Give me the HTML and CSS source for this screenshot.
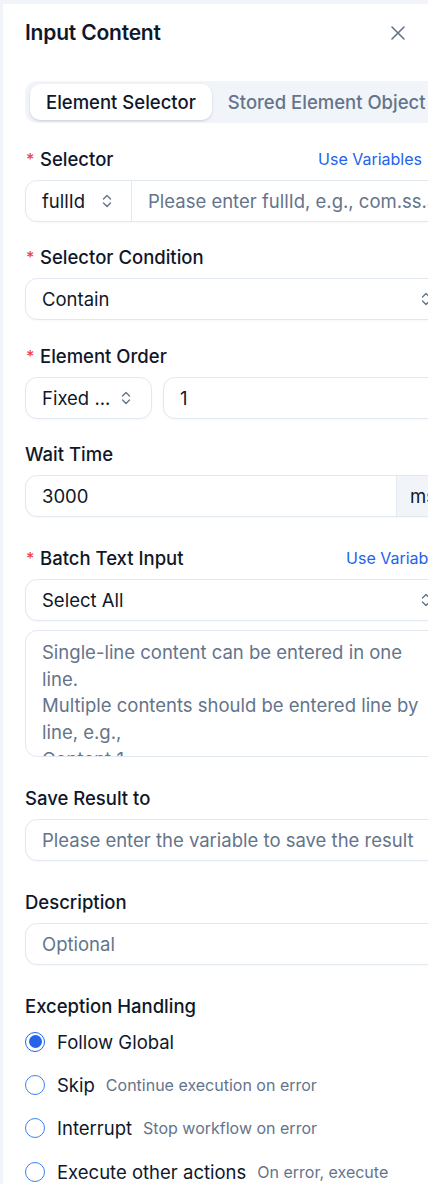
FILE: index.html
```html
<!DOCTYPE html>
<html lang="en">
<head>
<meta charset="utf-8">
<title>Input Content</title>
<link rel="stylesheet" href="styles.css">
</head>
<body>
<div class="panel">
  <header class="panel-header">
    <h1 class="title">Input Content</h1>
    <button class="close" aria-label="Close">
      <svg viewBox="0 0 24 24" width="24" height="24" fill="none" stroke="currentColor" stroke-width="1.6" stroke-linecap="round"><path d="M18 6 6 18"/><path d="m6 6 12 12"/></svg>
    </button>
  </header>

  <div class="tabs">
    <div class="tab active">Element Selector</div>
    <div class="tab">Stored Element Object</div>
  </div>

  <div class="field">
    <div class="label-row">
      <label class="label"><span class="req">*</span>Selector</label>
      <a class="link link-inset">Use Variables</a>
    </div>
    <div class="control group">
      <div class="group-select">
        <span>fullId</span>
        <svg class="chev" viewBox="0 0 10 14" fill="none" stroke="currentColor" stroke-width="1.4" stroke-linecap="round" stroke-linejoin="round"><path d="M1.5 5 5 1.5 8.5 5"/><path d="M1.5 9 5 12.5 8.5 9"/></svg>
      </div>
      <div class="group-input placeholder">Please enter fullId, e.g., com.ss.android.ugc:id/title</div>
    </div>
  </div>

  <div class="field">
    <div class="label-row">
      <label class="label"><span class="req">*</span>Selector Condition</label>
    </div>
    <div class="control select">
      <span>Contain</span>
      <svg class="chev" viewBox="0 0 10 14" fill="none" stroke="currentColor" stroke-width="1.4" stroke-linecap="round" stroke-linejoin="round"><path d="M1.5 5 5 1.5 8.5 5"/><path d="M1.5 9 5 12.5 8.5 9"/></svg>
    </div>
  </div>

  <div class="field">
    <div class="label-row">
      <label class="label"><span class="req">*</span>Element Order</label>
    </div>
    <div class="row">
      <div class="control select select-small">
        <span>Fixed ...</span>
        <svg class="chev" viewBox="0 0 10 14" fill="none" stroke="currentColor" stroke-width="1.4" stroke-linecap="round" stroke-linejoin="round"><path d="M1.5 5 5 1.5 8.5 5"/><path d="M1.5 9 5 12.5 8.5 9"/></svg>
      </div>
      <div class="control grow">1</div>
    </div>
  </div>

  <div class="field">
    <div class="label-row">
      <label class="label">Wait Time</label>
    </div>
    <div class="control group">
      <div class="group-input">3000</div>
      <div class="addon">ms</div>
    </div>
  </div>

  <div class="field field-wide">
    <div class="label-row">
      <label class="label"><span class="req">*</span>Batch Text Input</label>
      <a class="link">Use Variables</a>
    </div>
    <div class="control select">
      <span>Select All</span>
      <svg class="chev" viewBox="0 0 10 14" fill="none" stroke="currentColor" stroke-width="1.4" stroke-linecap="round" stroke-linejoin="round"><path d="M1.5 5 5 1.5 8.5 5"/><path d="M1.5 9 5 12.5 8.5 9"/></svg>
    </div>
    <div class="textarea placeholder">
      Single-line content can be entered in one<br>
      line.<br>
      Multiple contents should be entered line by<br>
      line, e.g.,<br>
      Content 1
    </div>
  </div>

  <div class="field field-wide">
    <div class="label-row">
      <label class="label">Save Result to</label>
    </div>
    <div class="control placeholder">Please enter the variable to save the result</div>
  </div>

  <div class="field field-wide">
    <div class="label-row">
      <label class="label">Description</label>
    </div>
    <div class="control placeholder">Optional</div>
  </div>

  <div class="field field-wide">
    <div class="label-row">
      <label class="label">Exception Handling</label>
    </div>
    <div class="radios">
      <div class="radio-row"><span class="radio checked"></span><span class="radio-label">Follow Global</span></div>
      <div class="radio-row"><span class="radio"></span><span class="radio-label">Skip</span><span class="radio-desc">Continue execution on error</span></div>
      <div class="radio-row"><span class="radio"></span><span class="radio-label">Interrupt</span><span class="radio-desc">Stop workflow on error</span></div>
      <div class="radio-row"><span class="radio"></span><span class="radio-label">Execute other actions</span><span class="radio-desc">On error, execute other actions</span></div>
    </div>
  </div>
</div>
</body>
</html>
```

FILE: styles.css
```css
* {
  box-sizing: border-box;
  margin: 0;
  padding: 0;
}

html,
body {
  width: 428px;
  height: 1184px;
  overflow: hidden;
}

body {
  background: #f1f5f9;
  padding: 4px 0 0 3px;
  font-family: Inter, "Noto Sans", sans-serif;
  color: #0f172a;
}

.panel {
  width: 480px;
  min-height: 1220px;
  background: #fff;
  padding: 15px 33px 0 22px;
}

.panel-header {
  display: flex;
  align-items: center;
  justify-content: space-between;
  height: 28px;
}

.title {
  font-size: 21px;
  font-weight: 600;
  line-height: 28px;
  letter-spacing: -0.2px;
}

.close {
  width: 24px;
  height: 24px;
  margin-right: 40px;
  border: 0;
  background: none;
  color: #64748b;
  display: flex;
  align-items: center;
  justify-content: center;
}

.tabs {
  margin-top: 34px;
  height: 42px;
  padding: 3px 5px;
  display: flex;
  background: #f1f5f9;
  border-radius: 12px;
}

.tab {
  height: 36px;
  padding: 0 16px;
  display: flex;
  align-items: center;
  font-size: 18.5px;
  font-weight: 500;
  color: #64748b;
  white-space: nowrap;
  border-radius: 10px;
}

.tab.active {
  background: #fff;
  color: #0f172a;
  box-shadow: 0 1px 3px rgba(15, 23, 42, 0.12), 0 1px 2px rgba(15, 23, 42, 0.06);
}

.field {
  margin-top: 24.5px;
}

.field-wide {
  margin-top: 30px;
}

.label-row {
  height: 22px;
  margin-bottom: 10px;
  display: flex;
  align-items: center;
  justify-content: space-between;
}

.label {
  display: flex;
  align-items: center;
  font-size: 18.5px;
  font-weight: 500;
  line-height: 22px;
  white-space: nowrap;
}

.req {
  width: 15px;
  padding-left: 1px;
  color: #ef4444;
  font-size: 16px;
}

.link {
  color: #2563eb;
  font-size: 16px;
  white-space: nowrap;
}

.link-inset {
  margin-right: 28px;
}

.control {
  height: 42px;
  border: 1px solid #e2e8f0;
  border-radius: 12px;
  padding: 0 16px;
  display: flex;
  align-items: center;
  font-size: 18.5px;
  background: #fff;
  white-space: nowrap;
  overflow: hidden;
  box-shadow: 0 1px 2px rgba(15, 23, 42, 0.03);
}

.placeholder {
  color: #64748b;
}

.select {
  justify-content: space-between;
  padding-right: 18px;
}

.chev {
  width: 10px;
  height: 14px;
  color: #64748b;
  flex: none;
}

.group {
  padding: 0;
}

.group-select {
  width: 106px;
  height: 100%;
  flex: none;
  display: flex;
  align-items: center;
  justify-content: space-between;
  padding: 0 19px 0 16px;
  border-right: 1px solid #e2e8f0;
}

.group-input {
  flex: 1;
  min-width: 0;
  padding: 0 16px;
  overflow: hidden;
}

.addon {
  height: 100%;
  width: 53px;
  flex: none;
  display: flex;
  align-items: center;
  padding-left: 13px;
  background: #f1f5f9;
  border-left: 1px solid #e2e8f0;
}

.row {
  display: flex;
  gap: 11px;
}

.select-small {
  width: 127px;
  flex: none;
  padding-right: 20px;
}

.grow {
  flex: 1;
}

.textarea {
  margin-top: 9px;
  height: 127px;
  border: 1px solid #e2e8f0;
  border-radius: 12px;
  padding: 8px 16px 0;
  font-size: 18.5px;
  line-height: 26.67px;
  overflow: hidden;
  white-space: nowrap;
}

.radios {
  width: 405px;
  margin-top: 12.7px;
  display: flex;
  flex-direction: column;
  gap: 19.3px;
}

.radio-row {
  min-height: 24px;
  display: flex;
  align-items: flex-start;
  line-height: 24px;
}

.radio {
  width: 20px;
  height: 20px;
  margin-top: 2px;
  flex: none;
  border: 1.5px solid #3b82f6;
  border-radius: 50%;
  background: #fff;
  margin-right: 12px;
  position: relative;
}

.radio.checked {
  border-color: #2563eb;
}

.radio.checked::after {
  content: "";
  position: absolute;
  inset: 2.5px;
  border-radius: 50%;
  background: #2563eb;
}

.radio-label {
  font-size: 18.5px;
  white-space: nowrap;
}

.radio-desc {
  margin-left: 11px;
  font-size: 16px;
  color: #64748b;
}
```
